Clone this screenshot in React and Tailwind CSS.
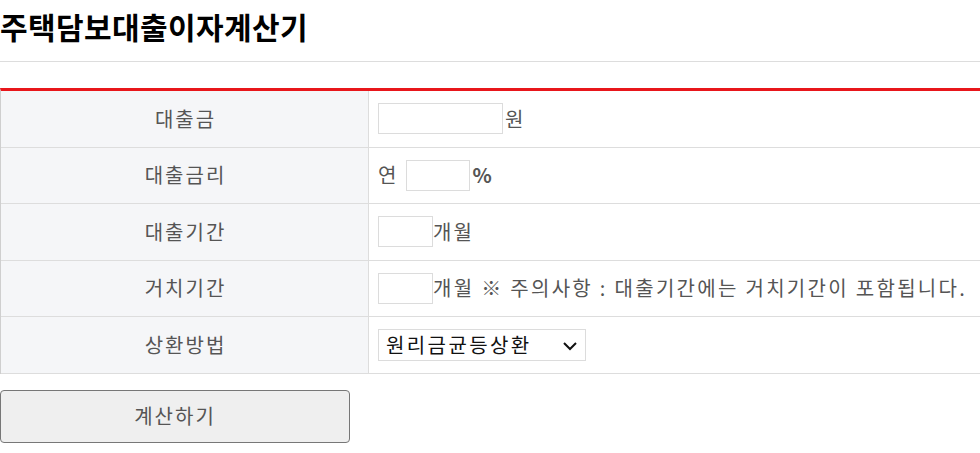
import React from 'react';

const FONT = { fontFamily: '"Noto Sans CJK KR", "Noto Sans", sans-serif' };

const ROWS = ['대출금', '대출금리', '대출기간', '거치기간', '상환방법'];

function Field({ w }) {
  return <input type="text" className={`h-[31px] border border-[#dcdcdc] bg-white outline-none ${w}`} />;
}

export default function App() {
  return (
    <div className="w-[980px] bg-white text-[#555]" style={FONT}>
      {/* Title */}
      <div className="h-[62px] border-b border-[#dddddd] pt-[6px]">
        <h1 className="text-[30px] font-bold leading-[40px] text-black tracking-[0.4px]">주택담보대출이자계산기</h1>
      </div>

      {/* Table */}
      <div className="mt-[26px] border-t-[3px] border-[#e8161b] border-l border-l-[#cfcfcf]">
        {ROWS.map((label, i) => (
          <div key={label} className="flex h-[56.5px] border-b border-[#dddddd]">
            <div className="w-[368px] shrink-0 bg-[#f5f6f8] border-r border-[#dddddd] flex items-center justify-center text-[20px] tracking-[2px] pl-[2px]">
              {label}
            </div>
            <div className="flex-1 flex items-center pl-[9px] text-[20px] tracking-[2px]">
              {i === 0 && (<><Field w="w-[125px]" /><span className="ml-[2px]">원</span></>)}
              {i === 1 && (<><span>연</span><div className="ml-[8px]"><Field w="w-[64px]" /></div><span className="ml-[2px] font-semibold tracking-normal">%</span></>)}
              {i === 2 && (<><Field w="w-[55px]" /><span>개월</span></>)}
              {i === 3 && (<><Field w="w-[55px]" /><span className="tracking-[2.3px]">개월 ※ 주의사항 : 대출기간에는 거치기간이 포함됩니다.</span></>)}
              {i === 4 && (
                <div className="relative w-[208px] h-[32px] border border-[#dcdcdc] flex items-center pl-[7px] text-[20px] text-[#111] tracking-[2.4px]">
                  <span>원리금균등상환</span>
                  <svg className="absolute right-[8px] top-[12px]" width="14" height="9" viewBox="0 0 14 9" fill="none" stroke="#111" strokeWidth="2">
                    <path d="M1 1l6 6 6-6" />
                  </svg>
                </div>
              )}
            </div>
          </div>
        ))}
      </div>

      {/* Button */}
      <div className="pt-[16px]">
        <button className="w-[350px] h-[53px] rounded-[4px] border border-[#777] bg-[#efefef] text-[20px] tracking-[2px] text-[#555]">
          계산하기
        </button>
      </div>
    </div>
  );
}
